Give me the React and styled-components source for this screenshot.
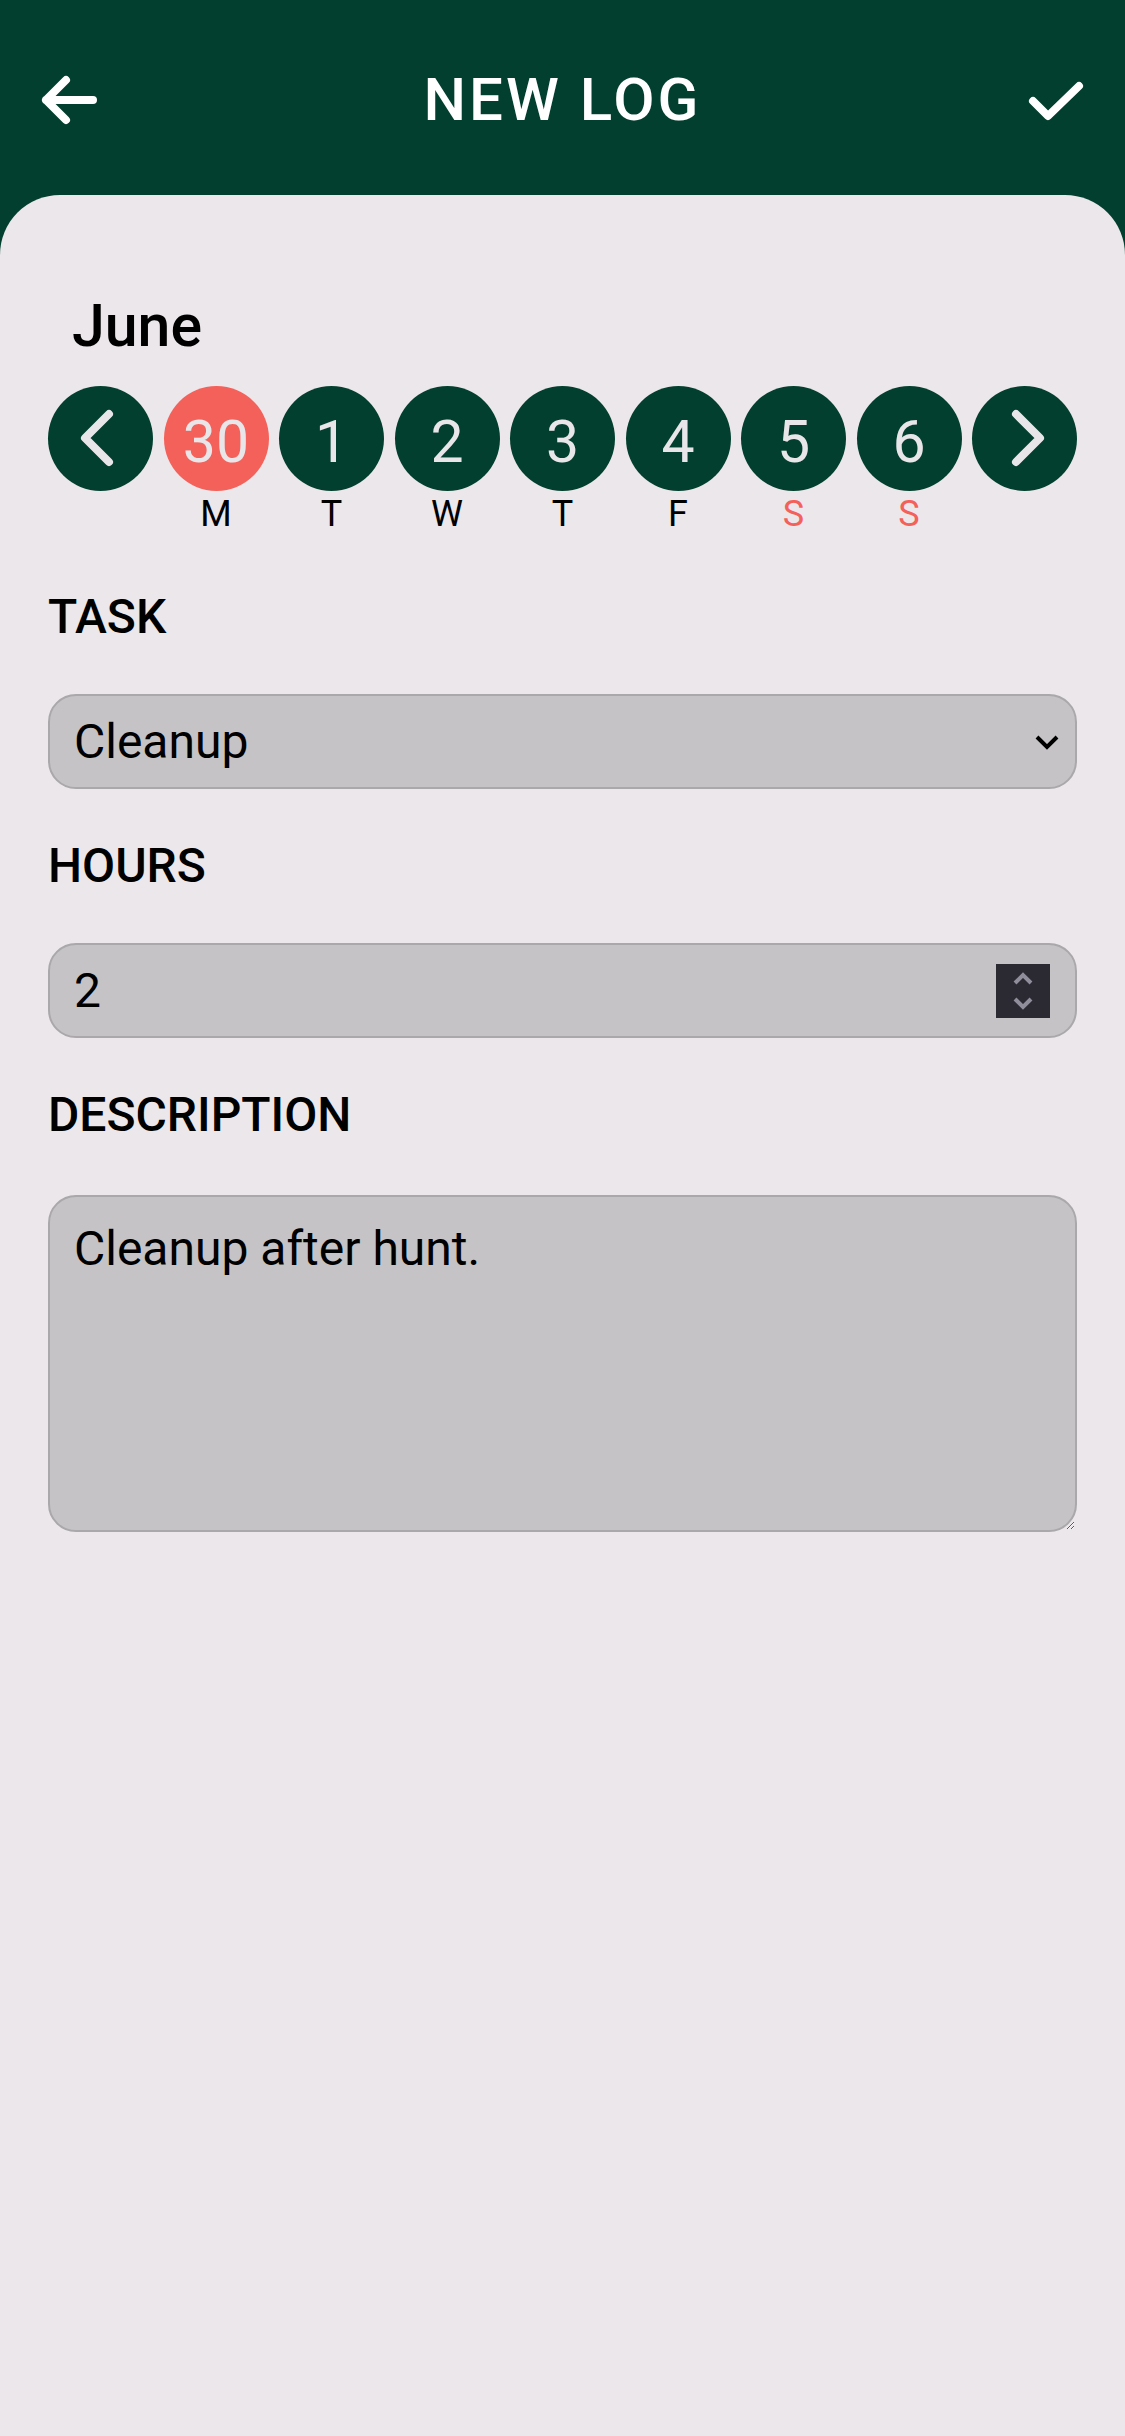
import styled, { createGlobalStyle } from "styled-components";

const GlobalStyle = createGlobalStyle`
  html, body {
    margin: 0;
    padding: 0;
    background: #033f2e;
    font-family: Roboto, "Liberation Sans", sans-serif;
  }
  * { box-sizing: border-box; }
`;

const Screen = styled.div`
  width: 1125px;
  min-height: 2436px;
  display: flex;
  flex-direction: column;
`;

const Header = styled.header`
  height: 195px;
  padding: 4px 40px 0;
  display: flex;
  align-items: center;
  justify-content: space-between;
  color: #fff;
`;

const Title = styled.h1`
  margin: 0;
  font-size: 60px;
  line-height: 60px;
  font-weight: 500;
  letter-spacing: 3px;
`;

const IconButton = styled.button`
  width: 60px;
  height: 50px;
  padding: 0;
  border: none;
  background: none;
  display: flex;
  svg { display: block; }
`;

const Panel = styled.main`
  flex: 1;
  background: #ebe7ea;
  border-radius: 60px 60px 0 0;
  padding: 101px 48px 0;
  display: flex;
  flex-direction: column;
`;

const Month = styled.h2`
  margin: 0 0 0 24px;
  font-size: 59px;
  line-height: 59px;
  font-weight: 500;
  color: #000;
`;

const Strip = styled.div`
  margin-top: 31px;
  display: flex;
  justify-content: space-between;
`;

const DayCol = styled.div`
  display: flex;
  flex-direction: column;
  align-items: center;
  gap: 5px;
`;

const Circle = styled.div`
  width: 105px;
  height: 105px;
  border-radius: 50%;
  background: ${(p) => (p.$active ? "#f4605a" : "#033f2e")};
  color: #e9e6ea;
  display: flex;
  align-items: center;
  justify-content: center;
  padding-top: ${(p) => (p.$icon ? "0" : "5px")};
  font-size: 59px;
  line-height: 59px;
`;

const Weekday = styled.span`
  height: 36px;
  font-size: 36px;
  line-height: 36px;
  color: ${(p) => (p.$weekend ? "#f4605a" : "#000")};
`;

const Form = styled.form`
  margin-top: 61px;
  display: flex;
  flex-direction: column;
  gap: 53px;
`;

const Field = styled.label`
  display: flex;
  flex-direction: column;
  gap: ${(p) => p.$gap || 53}px;
`;

const Label = styled.span`
  font-size: 48px;
  line-height: 48px;
  font-weight: 500;
  color: #000;
`;

const Box = styled.div`
  height: 95px;
  background: #c5c3c6;
  border: 2px solid #aaa8ab;
  border-radius: 28px;
  display: flex;
  align-items: center;
  padding: 0 16px 0 24px;
`;

const Select = styled.select`
  flex: 1;
  appearance: none;
  border: none;
  outline: none;
  background: transparent;
  font: inherit;
  font-size: 48px;
  color: #000;
  padding: 0;
`;

const NumberInput = styled.input`
  flex: 1;
  min-width: 0;
  border: none;
  outline: none;
  background: transparent;
  font: inherit;
  font-size: 48px;
  color: #000;
  padding: 0;
  -moz-appearance: textfield;
  &::-webkit-inner-spin-button,
  &::-webkit-outer-spin-button {
    -webkit-appearance: none;
    margin: 0;
  }
`;

const Spinner = styled.span`
  width: 54px;
  height: 54px;
  margin-right: 9px;
  background: #2b2a33;
  display: flex;
  svg { display: block; }
`;

const TextArea = styled.textarea`
  height: 337px;
  background: #c5c3c6;
  border: 2px solid #aaa8ab;
  border-radius: 28px;
  padding: 24px 24px;
  font: inherit;
  font-size: 48px;
  line-height: 56px;
  color: #000;
  outline: none;
`;

const Chevron = ({ dir }) => (
  <svg width="105" height="105" viewBox="0 0 105 105">
    <polyline
      points={dir === "left" ? "61,28 37,52 61,76" : "44,28 68,52 44,76"}
      fill="none"
      stroke="#e9e6ea"
      strokeWidth="8"
      strokeLinecap="round"
      strokeLinejoin="round"
    />
  </svg>
);

const days = [
  { n: 30, d: "M", active: true },
  { n: 1, d: "T" },
  { n: 2, d: "W" },
  { n: 3, d: "T" },
  { n: 4, d: "F" },
  { n: 5, d: "S", weekend: true },
  { n: 6, d: "S", weekend: true },
];

export default function App() {
  return (
    <Screen>
      <GlobalStyle />
      <Header>
        <IconButton aria-label="Back">
          <svg width="60" height="50" viewBox="0 0 60 50">
            <path
              d="M26 5 L6 25 L26 45 M6 25 H53"
              fill="none"
              stroke="#fff"
              strokeWidth="8"
              strokeLinecap="round"
              strokeLinejoin="round"
            />
          </svg>
        </IconButton>
        <Title>NEW LOG</Title>
        <IconButton aria-label="Save">
          <svg width="60" height="50" viewBox="0 0 60 50">
            <polyline
              points="8,26 23,41 54,11"
              fill="none"
              stroke="#fff"
              strokeWidth="8"
              strokeLinecap="round"
              strokeLinejoin="round"
            />
          </svg>
        </IconButton>
      </Header>
      <Panel>
        <Month>June</Month>
        <Strip>
          <DayCol>
            <Circle $icon><Chevron dir="left" /></Circle>
            <Weekday />
          </DayCol>
          {days.map((day) => (
            <DayCol key={day.n}>
              <Circle $active={day.active}>{day.n}</Circle>
              <Weekday $weekend={day.weekend}>{day.d}</Weekday>
            </DayCol>
          ))}
          <DayCol>
            <Circle $icon><Chevron dir="right" /></Circle>
            <Weekday />
          </DayCol>
        </Strip>
        <Form>
          <Field>
            <Label>TASK</Label>
            <Box>
              <Select defaultValue="cleanup">
                <option value="cleanup">Cleanup</option>
              </Select>
              <svg width="24" height="16" viewBox="0 0 24 16">
                <polyline points="2,3 12,13 22,3" fill="none" stroke="#000" strokeWidth="4" />
              </svg>
            </Box>
          </Field>
          <Field>
            <Label>HOURS</Label>
            <Box>
              <NumberInput type="number" defaultValue={2} />
              <Spinner>
                <svg width="54" height="54" viewBox="0 0 54 54">
                  <path
                    d="M19 19 L27 11 L35 19 M19 35 L27 43 L35 35"
                    fill="none"
                    stroke="#8f8e9a"
                    strokeWidth="4"
                  />
                </svg>
              </Spinner>
            </Box>
          </Field>
          <Field $gap={56}>
            <Label>DESCRIPTION</Label>
            <TextArea defaultValue="Cleanup after hunt." />
          </Field>
        </Form>
      </Panel>
    </Screen>
  );
}
